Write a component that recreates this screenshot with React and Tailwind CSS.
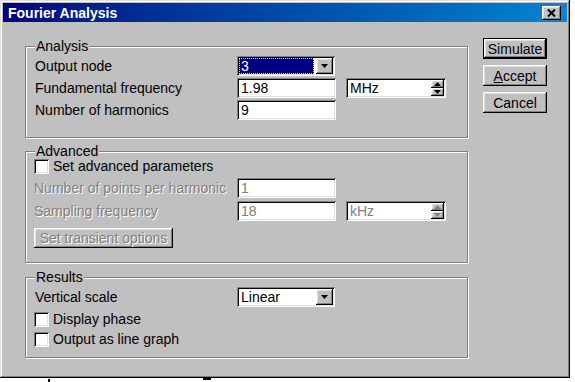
const raised =
  "shadow-[inset_-1px_-1px_#000,inset_1px_1px_#fff,inset_-2px_-2px_#808080,inset_2px_2px_#dfdfdf]";
const sunken =
  "shadow-[inset_1px_1px_#808080,inset_-1px_-1px_#fff,inset_2px_2px_#000,inset_-2px_-2px_#dfdfdf]";
const etched =
  "border border-[#808080] shadow-[1px_1px_0_#fff,inset_1px_1px_0_#fff]";
const disabledText = "text-[#808080] [text-shadow:1px_1px_0_#fff]";

function Arrow({ dir = "down", color = "#000" }) {
  return (
    <svg width="7" height="4" viewBox="0 0 7 4">
      {dir === "down" ? (
        <path d="M0 0h7L3.5 4z" fill={color} />
      ) : (
        <path d="M0 4h7L3.5 0z" fill={color} />
      )}
    </svg>
  );
}

function Combo({ value, selected, width }) {
  return (
    <div className={`h-[20px] ${width} bg-white ${sunken} flex items-stretch p-[2px]`}>
      <div className="flex-1 flex items-center pr-[2px]">
        <div
          className={`h-full w-full flex items-center pl-[1px] ${
            selected ? "bg-[#000080] text-white border border-dotted border-[#e8e860]" : "pl-[2px]"
          }`}
        >
          {value}
        </div>
      </div>
      <div className={`w-[17px] bg-[#c0c0c0] ${raised} flex items-center justify-center`}>
        <Arrow />
      </div>
    </div>
  );
}

function Field({ value, disabled }) {
  return (
    <div
      className={`h-[20px] w-[99px] bg-white ${sunken} flex items-center pl-[4px] ${
        disabled ? "text-[#808080]" : ""
      }`}
    >
      {value}
    </div>
  );
}

function Spinner({ value, disabled }) {
  const c = disabled ? "#808080" : "#000";
  return (
    <div className={`h-[20px] w-[100px] bg-white ${sunken} flex p-[2px]`}>
      <div className={`flex-1 flex items-center pl-[2px] ${disabled ? "text-[#808080]" : ""}`}>
        {value}
      </div>
      <div className="w-[13px] flex flex-col">
        <div className={`flex-1 bg-[#c0c0c0] ${raised} flex items-center justify-center`}>
          <Arrow dir="up" color={c} />
        </div>
        <div className={`flex-1 bg-[#c0c0c0] ${raised} flex items-center justify-center`}>
          <Arrow color={c} />
        </div>
      </div>
    </div>
  );
}

function Check({ label }) {
  return (
    <div className="flex items-center h-[16px]">
      <div className={`w-[15px] h-[15px] bg-white ${sunken}`} />
      <span className="ml-[4px]">{label}</span>
    </div>
  );
}

function Group({ title, className, children }) {
  return (
    <div className={`relative ${etched} ${className}`}>
      <span className="absolute -top-[9px] left-[9px] px-[1px] leading-[16px] bg-[#c0c0c0]">
        {title}
      </span>
      {children}
    </div>
  );
}

function Button({ children, isDefault }) {
  return (
    <div
      className={`w-[64px] h-[21px] flex items-center justify-center bg-[#c0c0c0] ${
        isDefault ? "border border-black" : ""
      }`}
    >
      <div className={`w-full h-full flex items-center justify-center ${raised}`}>{children}</div>
    </div>
  );
}

export default function App() {
  return (
    <div className="w-[575px] h-[382px] bg-white overflow-hidden font-['Liberation_Sans',Arial,sans-serif] text-[14px] leading-[16px] text-black">
      <div className="w-[570px] h-[378px] bg-[#c0c0c0] p-[3px] flex flex-col shadow-[inset_-1px_-1px_#000,inset_1px_1px_#dfdfdf,inset_-2px_-2px_#808080,inset_2px_2px_#fff]">
        <div className="h-[19px] bg-linear-to-r from-[#000080] to-[#1084d0] flex items-center justify-between pl-[5px] pr-[6px]">
          <span className="text-white font-bold">Fourier Analysis</span>
          <div className={`w-[19px] h-[14px] bg-[#c0c0c0] ${raised} flex items-center justify-center`}>
            <svg width="9" height="8" viewBox="0 0 9 8">
              <path d="M1 0.5L8 7.5M8 0.5L1 7.5" stroke="#000" strokeWidth="2" />
            </svg>
          </div>
        </div>

        <div className="flex pl-[22px] pt-[16px]">
          <div className="flex flex-col w-[443px] mt-[8px]">
            <Group title="Analysis" className="h-[92px] pt-[9px] pl-[9px]">
              <div className="flex items-center h-[20px]">
                <span className="w-[202px]">Output node</span>
                <Combo value="3" selected width="w-[98px]" />
              </div>
              <div className="flex items-center h-[20px] mt-[2px]">
                <span className="w-[202px]">Fundamental frequency</span>
                <Field value="1.98" />
                <div className="ml-[10px]">
                  <Spinner value="MHz" />
                </div>
              </div>
              <div className="flex items-center h-[20px] mt-[2px]">
                <span className="w-[202px]">Number of harmonics</span>
                <Field value="9" />
              </div>
            </Group>

            <Group title="Advanced" className="h-[112px] mt-[13px] pt-[6px] pl-[8px]">
              <Check label="Set advanced parameters" />
              <div className="flex items-center h-[20px] mt-[4px]">
                <span className={`w-[203px] ${disabledText}`}>Number of points per harmonic</span>
                <Field value="1" disabled />
              </div>
              <div className="flex items-center h-[20px] mt-[3px]">
                <span className={`w-[203px] ${disabledText}`}>Sampling frequency</span>
                <Field value="18" disabled />
                <div className="ml-[10px]">
                  <Spinner value="kHz" disabled />
                </div>
              </div>
              <div
                className={`mt-[7px] w-[139px] h-[20px] bg-[#c0c0c0] ${raised} flex items-center justify-center ${disabledText}`}
              >
                Set transient options
              </div>
            </Group>

            <Group title="Results" className="h-[81px] mt-[14px] pt-[9px] pl-[8px]">
              <div className="flex items-center h-[20px]">
                <span className="w-[203px] pl-[1px]">Vertical scale</span>
                <Combo value="Linear" width="w-[98px]" />
              </div>
              <div className="mt-[4px]">
                <Check label="Display phase" />
              </div>
              <div className="mt-[4px]">
                <Check label="Output as line graph" />
              </div>
            </Group>
          </div>

          <div className="flex flex-col gap-[6px] ml-[15px]">
            <Button isDefault>Simulate</Button>
            <Button>
              <span>
                <span className="underline">A</span>ccept
              </span>
            </Button>
            <Button>Cancel</Button>
          </div>
        </div>
      </div>
      <div className="flex h-[4px]">
        <div className="ml-[48px] w-[2px] h-[3px] bg-black mt-[1px]" />
        <div className="ml-[153px] w-[8px] h-[2px] bg-black" />
      </div>
    </div>
  );
}
